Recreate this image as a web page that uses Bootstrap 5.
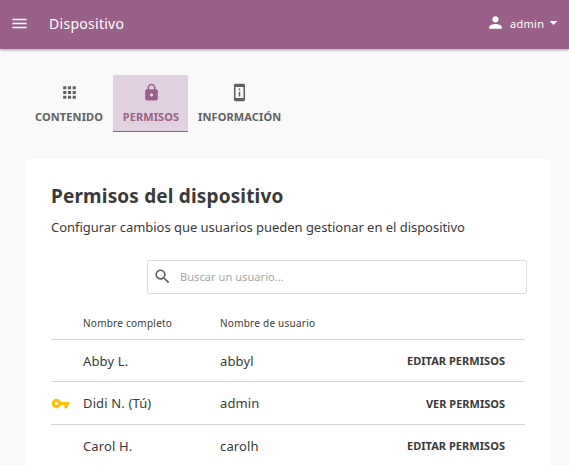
<!DOCTYPE html>
<html lang="es">
<head>
<meta charset="utf-8">
<meta name="viewport" content="width=device-width, initial-scale=1">
<title>Dispositivo</title>
<link href="https://cdn.jsdelivr.net/npm/bootstrap@5.3.0/dist/css/bootstrap.min.css" rel="stylesheet">
<style>
body{font-family:"Noto Sans",sans-serif;font-size:13px;line-height:18px;color:#3a3a3a;background:#f9f9f9}
svg{display:block;fill:currentColor;flex:none}
.app-bar{height:49px;background:#996189;box-shadow:0 1px 3px rgba(0,0,0,.35);padding:0 6px 2px 10px}
.app-title{font-size:14px;margin-left:20px;letter-spacing:.28px}
.user-menu{font-size:11px;color:#fff;padding-bottom:2px}
.user-name{margin-left:5px;width:34px;letter-spacing:.3px;padding-top:3px}
.tabs{padding:26px 0 0 25px}
.tab-item{height:57px;padding:8px 10px 0;font-size:11px;font-weight:700;line-height:16px;color:#616161;letter-spacing:.13px}
.tab-item svg{margin-bottom:7px}
.tab-content-link{width:88px}.tab-item.active{width:75px;letter-spacing:.1px;padding-right:9px}
.tab-item.active{background:#e2d1e0;color:#996189;border-bottom:1px solid #996189}
.panel{margin:27px 19px 0 26px;padding:25px 25px 0;background:#fff;border-radius:2px;height:306px;overflow:hidden}
.panel h1{font-size:19px;line-height:24px;font-weight:700;letter-spacing:.16px}
.intro{letter-spacing:-.035px;margin-top:10px}
.search-box{width:380px;height:34px;border:1px solid #dedede;border-radius:2px;margin:24px 0 0 96px;padding:0 5px 1px;background:#fff}
.search-box svg{color:#616161}
.search-box input{font-family:inherit;font-size:11px;color:#3a3a3a;padding:0;letter-spacing:.07px}
.search-box input::placeholder{color:#a8a8a8;opacity:1}
.users{margin-top:13px;table-layout:fixed;width:474px;--bs-table-bg:transparent;border-color:#d5d5d5}
.users th{font-size:10px;font-weight:400;height:32px;line-height:16px;letter-spacing:.24px;vertical-align:middle}
.users>:not(caption)>*>*{padding:0;color:#3a3a3a;border-bottom:1px solid #d5d5d5}
.users>tbody>tr>td{height:42px;letter-spacing:.14px;padding-top:2px}
.users>tbody>tr.own>td{height:43px;padding-top:0}
.users>tbody>tr>td.text-end,.users>tbody>tr.own>td.text-end{padding-top:0}
.users>tbody>tr.own>td:first-child{padding-top:1px}
.users .action{font-size:11px;font-weight:700;color:#3a3a3a;padding:0 20px 0 0;border:0;line-height:16px;letter-spacing:.04px}
.users .own .action{letter-spacing:0}
.c-icon{width:32px}.c-name{width:137px}.c-user{width:137px}
</style>
<script src="https://cdn.jsdelivr.net/npm/bootstrap@5.3.0/dist/js/bootstrap.bundle.min.js"></script>
</head>
<body>
<header class="app-bar d-flex align-items-center text-white">
  <svg width="19" height="19" viewBox="0 0 24 24"><path d="M3 18h18v-2H3v2zm0-5h18v-2H3v2zm0-7v2h18V6H3z"/></svg>
  <span class="app-title">Dispositivo</span>
  <div class="user-menu d-flex align-items-center ms-auto">
    <svg width="19" height="19" viewBox="0 0 24 24"><path d="M12 12c2.210 0 4-1.790 4-4s-1.790-4-4-4-4 1.790-4 4 1.790 4 4 4zm0 2c-2.670 0-8 1.340-8 4v2h16v-2c0-2.660-5.330-4-8-4z"/></svg>
    <span class="user-name">admin</span>
    <svg width="19" height="19" viewBox="0 0 24 24"><path d="M7 10l5 5 5-5z"/></svg>
  </div>
</header>
<nav class="tabs d-flex">
  <a class="tab-item tab-content-link d-flex flex-column align-items-center text-decoration-none" href="#">
    <svg width="19" height="19" viewBox="0 0 24 24"><path d="M4 8h4V4H4v4zm6 12h4v-4h-4v4zm-6 0h4v-4H4v4zm0-6h4v-4H4v4zm6 0h4v-4h-4v4zm6-10v4h4V4h-4zm-6 4h4V4h-4v4zm6 6h4v-4h-4v4zm0 6h4v-4h-4v4z"/></svg>CONTENIDO</a>
  <a class="tab-item active d-flex flex-column align-items-center text-decoration-none" href="#">
    <svg width="19" height="19" viewBox="0 0 24 24"><path d="M18 8h-1V6c0-2.760-2.240-5-5-5S7 3.240 7 6v2H6c-1.100 0-2 .9-2 2v10c0 1.100.9 2 2 2h12c1.100 0 2-.9 2-2V10c0-1.100-.9-2-2-2zm-6 9c-1.100 0-2-.9-2-2s.9-2 2-2 2 .9 2 2-.9 2-2 2zm3.100-9H8.900V6c0-1.710 1.390-3.100 3.100-3.100s3.100 1.390 3.100 3.100v2z"/></svg>PERMISOS</a>
  <a class="tab-item d-flex flex-column align-items-center text-decoration-none" href="#">
    <svg width="19" height="19" viewBox="0 0 24 24"><path d="M11 7h2v2h-2zm0 4h2v6h-2zm6-9.990L7 1c-1.100 0-2 .9-2 2v18c0 1.100.9 2 2 2h10c1.100 0 2-.9 2-2V3c0-1.100-.9-1.990-2-1.990zM17 19H7V5h10v14z"/></svg>INFORMACIÓN</a>
</nav>
<main class="panel">
  <h1 class="mb-0">Permisos del dispositivo</h1>
  <p class="mb-0 intro">Configurar cambios que usuarios pueden gestionar en el dispositivo</p>
  <label class="search-box d-flex align-items-center">
    <svg width="19" height="19" viewBox="0 0 24 24"><path d="M15.500 14h-.79l-.28-.27C15.410 12.590 16 11.110 16 9.500 16 5.910 13.090 3 9.500 3S3 5.910 3 9.500 5.910 16 9.500 16c1.610 0 3.090-.59 4.230-1.570l.27.28v.79l5 4.990L20.490 19l-4.990-5zm-6 0C7.010 14 5 11.990 5 9.500S7.010 5 9.500 5 14 7.010 14 9.500 11.990 14 9.500 14z"/></svg>
    <input class="border-0 bg-transparent flex-grow-1 ms-2" type="text" placeholder="Buscar un usuario...">
  </label>
  <table class="table users align-middle mb-0">
    <colgroup><col class="c-icon"><col class="c-name"><col class="c-user"><col></colgroup>
    <thead><tr><th></th><th>Nombre completo</th><th>Nombre de usuario</th><th></th></tr></thead>
    <tbody>
      <tr><td></td><td>Abby L.</td><td>abbyl</td><td class="text-end"><button class="btn action">EDITAR PERMISOS</button></td></tr>
      <tr class="own"><td><svg width="19" height="19" viewBox="0 0 24 24"><path fill="#ffc107" d="M12.650 10C11.830 7.670 9.610 6 7 6c-3.310 0-6 2.690-6 6s2.690 6 6 6c2.610 0 4.830-1.670 5.650-4H17v4h4v-4h2v-4H12.650zM7 14c-1.100 0-2-.9-2-2s.9-2 2-2 2 .9 2 2-.9 2-2 2z"/></svg></td><td>Didi N. (Tú)</td><td>admin</td><td class="text-end"><button class="btn action">VER PERMISOS</button></td></tr>
      <tr><td></td><td>Carol H.</td><td>carolh</td><td class="text-end"><button class="btn action">EDITAR PERMISOS</button></td></tr>
    </tbody>
  </table>
</main>
</body>
</html>
